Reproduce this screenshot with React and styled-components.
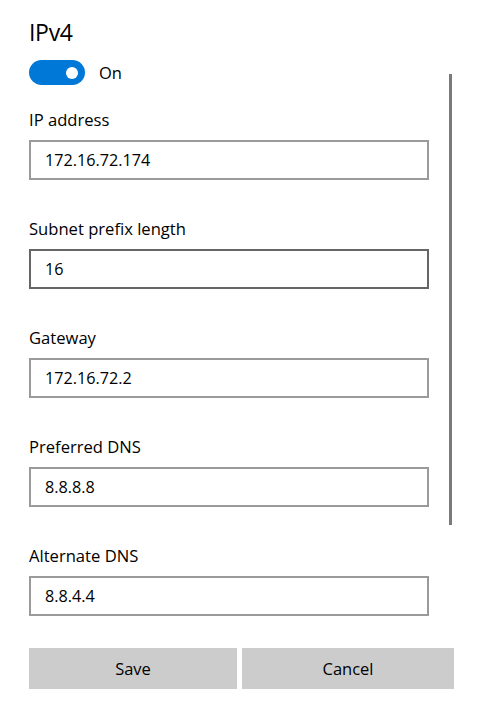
import React from 'react';
import styled, { createGlobalStyle } from 'styled-components';

const GlobalStyle = createGlobalStyle`
	html, body {
		margin: 0;
		padding: 0;
		background: #fff;
	}
	body {
		font-family: 'Open Sans', 'Noto Sans', sans-serif;
		color: #000;
	}
`;

const Page = styled.div`
	position: relative;
	width: 484px;
	height: 711px;
	box-sizing: border-box;
	padding: 16px 0 0 29px;
	overflow: hidden;
`;

const Title = styled.h1`
	margin: 0;
	font-size: 23px;
	font-weight: 400;
	line-height: 32px;
	letter-spacing: -0.3px;
`;

const ToggleRow = styled.div`
	display: flex;
	align-items: center;
	gap: 14px;
	margin-top: 12px;
	height: 25px;
`;

const Switch = styled.div`
	position: relative;
	width: 56px;
	height: 25px;
	border-radius: 13px;
	background: ${({ on }) => (on ? '#0078d7' : '#fff')};

	&::after {
		content: '';
		position: absolute;
		top: 6.5px;
		right: 7.5px;
		width: 12px;
		height: 12px;
		border-radius: 50%;
		background: #fff;
	}
`;

const SwitchLabel = styled.span`
	font-size: 16.5px;
	line-height: 25px;
`;

const Fields = styled.div`
	display: flex;
	flex-direction: column;
	gap: 37px;
	margin-top: 23px;
`;

const Field = styled.div`
	display: flex;
	flex-direction: column;
	gap: 8px;
`;

const Label = styled.label`
	font-size: 16.6px;
	line-height: 24px;
`;

const Input = styled.div`
	box-sizing: border-box;
	width: 400px;
	height: 40px;
	padding: 0 14px;
	border: 2px solid ${({ focused }) => (focused ? '#666' : '#9a9a9a')};
	display: flex;
	align-items: center;
	font-size: 16.2px;
`;

const Buttons = styled.div`
	display: grid;
	grid-template-columns: 208px 212px;
	gap: 5px;
	margin-top: 32px;
`;

const Button = styled.button`
	height: 41px;
	border: none;
	background: #ccc;
	font-family: inherit;
	font-size: 16.5px;
	color: #000;
	padding: 0;
`;

const ScrollThumb = styled.div`
	position: absolute;
	left: 449px;
	top: 74px;
	width: 3px;
	height: 451px;
	background: #7a7a7a;
`;

const fields = [
	{ label: 'IP address', value: '172.16.72.174' },
	{ label: 'Subnet prefix length', value: '16', focused: true },
	{ label: 'Gateway', value: '172.16.72.2' },
	{ label: 'Preferred DNS', value: '8.8.8.8' },
	{ label: 'Alternate DNS', value: '8.8.4.4' }
];

const App = () => (
	<>
		<GlobalStyle />
		<Page>
			<Title>IPv4</Title>
			<ToggleRow>
				<Switch on />
				<SwitchLabel>On</SwitchLabel>
			</ToggleRow>
			<Fields>
				{fields.map(({ label, value, focused }) => (
					<Field key={label}>
						<Label>{label}</Label>
						<Input focused={focused}>{value}</Input>
					</Field>
				))}
			</Fields>
			<Buttons>
				<Button>Save</Button>
				<Button>Cancel</Button>
			</Buttons>
			<ScrollThumb />
		</Page>
	</>
);

export default App;
